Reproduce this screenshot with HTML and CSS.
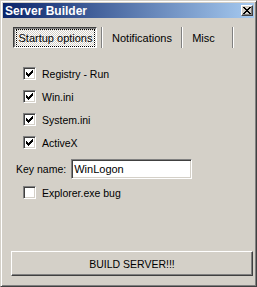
FILE: index.html
```html
<!DOCTYPE html>
<html lang="en">
<head>
    <meta charset="UTF-8">
    <title>Server Builder</title>
    <link rel="stylesheet" href="styles.css">
</head>
<body>

    <div class="window">
        <div class="titlebar">
            <span class="title">Server Builder</span>
            <span class="close">
                <svg width="8" height="7" viewBox="0 0 8 7" shape-rendering="crispEdges">
                    <path d="M0 0h2v1H0z M6 0h2v1H6z M1 1h2v1H1z M5 1h2v1H5z M2 2h4v1H2z M3 3h2v1H3z M2 4h4v1H2z M1 5h2v1H1z M5 5h2v1H5z M0 6h2v1H0z M6 6h2v1H6z" fill="#000"/>
                </svg>
            </span>
        </div>

        <div class="tabs">
            <div class="tab active"><span class="focus">Startup options</span></div>
            <div class="tab-sep first"></div>
            <div class="tab notif">Notifications</div>
            <div class="tab-sep"></div>
            <div class="tab misc">Misc</div>
            <div class="tab-sep last"></div>
        </div>

        <div class="options">
            <label class="option"><span class="check on"><svg width="11" height="11" viewBox="0 0 11 11" shape-rendering="crispEdges"><path d="M2 4h1v3H2z M3 5h1v3H3z M4 6h1v3H4z M5 5h1v3H5z M6 4h1v3H6z M7 3h1v3H7z M8 2h1v3H8z" fill="#000"/></svg></span>Registry - Run</label>
            <label class="option"><span class="check on"><svg width="11" height="11" viewBox="0 0 11 11" shape-rendering="crispEdges"><path d="M2 4h1v3H2z M3 5h1v3H3z M4 6h1v3H4z M5 5h1v3H5z M6 4h1v3H6z M7 3h1v3H7z M8 2h1v3H8z" fill="#000"/></svg></span>Win.ini</label>
            <label class="option"><span class="check on"><svg width="11" height="11" viewBox="0 0 11 11" shape-rendering="crispEdges"><path d="M2 4h1v3H2z M3 5h1v3H3z M4 6h1v3H4z M5 5h1v3H5z M6 4h1v3H6z M7 3h1v3H7z M8 2h1v3H8z" fill="#000"/></svg></span>System.ini</label>
            <label class="option"><span class="check on"><svg width="11" height="11" viewBox="0 0 11 11" shape-rendering="crispEdges"><path d="M2 4h1v3H2z M3 5h1v3H3z M4 6h1v3H4z M5 5h1v3H5z M6 4h1v3H6z M7 3h1v3H7z M8 2h1v3H8z" fill="#000"/></svg></span>ActiveX</label>
        </div>

        <div class="keyrow">
            <span class="keylabel">Key name:</span>
            <input class="keyinput" type="text" value="WinLogon">
        </div>

        <label class="option explorer"><span class="check"></span>Explorer.exe bug</label>

        <button class="build">BUILD SERVER!!!</button>
    </div>

</body>
</html>
```

FILE: styles.css
```css
body {
    margin: 0;
    font-family: "Liberation Sans", Arial, sans-serif;
    font-size: 10.5px;
    color: #000;
    background: #d4d0c8;
}
.window {
    width: 257px;
    height: 287px;
    box-sizing: border-box;
    border: 1px solid;
    border-color: #d4d0c8 #404040 #404040 #d4d0c8;
    box-shadow: inset 1px 1px #fff, inset -1px -1px #808080;
    padding: 2px;
    background: #d4d0c8;
    display: flex;
    flex-direction: column;
}
.titlebar {
    height: 15px;
    display: flex;
    align-items: center;
    justify-content: space-between;
    padding: 0 1px 0 2px;
    background: linear-gradient(to right, #0a246a, #a6caf0);
}
.title {
    color: #fff;
    font-weight: bold;
    font-size: 12px;
}
.close {
    width: 12px;
    height: 11px;
    box-sizing: border-box;
    border: 1px solid;
    border-color: #fff #404040 #404040 #fff;
    box-shadow: inset -1px -1px #808080;
    background: #d4d0c8;
    display: flex;
    align-items: center;
    justify-content: center;
}
.close svg {
    display: block;
}

/* tabs drawn as flat buttons */
.tabs {
    display: flex;
    height: 21px;
    margin: 9px 0 0 10px;
}
.tab {
    display: flex;
    align-items: center;
    justify-content: center;
    box-sizing: border-box;
    font-size: 11px;
}
.tab.active {
    width: 84px;
    border: 1px solid;
    border-color: #404040 #fff #fff #404040;
    box-shadow: inset 1px 1px #808080;
    background-color: #fff;
    background-image: conic-gradient(#fff 25%, #d4d0c8 0 50%, #fff 0 75%, #d4d0c8 0);
    background-size: 2px 2px;
    padding: 2px 2px 1px 3px;
}
.tab.active .focus {
    flex: 1;
    align-self: stretch;
    display: flex;
    align-items: center;
    justify-content: center;
    outline: 1px dotted #000;
}
.tab.notif {
    width: 78px;
}
.tab.misc {
    width: 41px;
}
.tab-sep {
    width: 1px;
    border-right: 1px solid #fff;
    background: #808080;
}
.tab-sep.first {
    margin-left: 4px;
}
.tab-sep.last {
    margin-left: 8px;
}

.options {
    margin: 14px 0 0 20px;
}
.option {
    display: flex;
    align-items: center;
    gap: 6px;
    height: 23px;
}
.check {
    width: 13px;
    height: 13px;
    box-sizing: border-box;
    border: 1px solid;
    border-color: #808080 #fff #fff #808080;
    box-shadow: inset 1px 1px #404040, inset -1px -1px #d4d0c8;
    background: #fff;
}
.check svg {
    display: block;
}
.keyrow {
    display: flex;
    align-items: center;
    gap: 5px;
    margin: 5px 0 0 13px;
}
.keyinput {
    width: 121px;
    height: 20px;
    box-sizing: border-box;
    margin: 0;
    padding: 0 2px;
    border: 1px solid;
    border-color: #808080 #fff #fff #808080;
    box-shadow: inset 1px 1px #404040, inset -1px -1px #d4d0c8;
    font-family: "Liberation Sans", Arial, sans-serif;
    font-size: 11px;
    outline: none;
}
.explorer {
    margin: 2px 0 0 20px;
}
.build {
    margin: auto 0 8px 8px;
    width: 242px;
    height: 25px;
    box-sizing: border-box;
    border: 1px solid;
    border-color: #fff #404040 #404040 #fff;
    box-shadow: inset -1px -1px #808080;
    background: #d4d0c8;
    font-family: "Liberation Sans", Arial, sans-serif;
    font-size: 10.5px;
    color: #000;
    padding: 0;
}
```
